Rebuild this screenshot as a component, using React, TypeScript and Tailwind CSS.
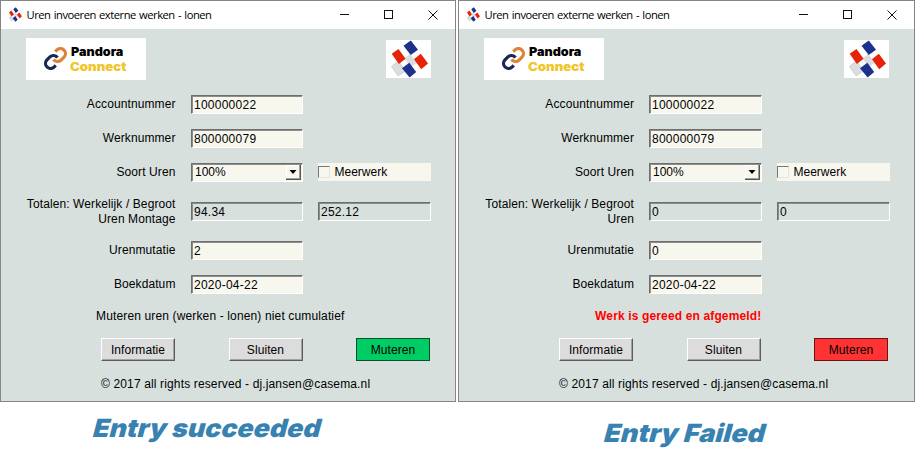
import React from "react";

const SANS = "font-['Liberation_Sans',Arial,sans-serif]";
const HEAVY = "font-['Inter','Arial_Black',sans-serif] font-black";

function Blocks({ className }: { className: string }) {
  return (
    <svg viewBox="0 0 45 38" preserveAspectRatio="none" className={className}>
      <path d="M5.5 26.5L12.5 21L19.5 31L12 35.8Z" fill="#dcdde1" stroke="#c4c5ca" strokeWidth=".8" />
      <path d="M18.5 18.5L24.3 13.8L31 23L24.5 27Z" fill="#dcdde1" />
      <path d="M17.5 5.8L24.8 0.4L32 9.8L24.7 15Z" fill="#1c318b" />
      <path d="M5.7 13.8L12.5 9L19.6 18.8L12.8 24Z" fill="#e62306" />
      <path d="M28 19.2L34.8 13.8L42 23.6L35.2 29.2Z" fill="#e62306" />
      <path d="M16 28.2L23.3 22.8L30.2 32L23.6 37.6Z" fill="#1c318b" />
    </svg>
  );
}

function TitleBar() {
  return (
    <div className="flex h-[27.5px] shrink-0 items-center bg-white">
      <Blocks className="ml-[6px] h-[15px] w-[16px] shrink-0" />
      <span className="ml-[3.5px] mt-[1px] whitespace-nowrap font-['Open_Sans','Noto_Sans',sans-serif] text-[11.2px] tracking-[-0.48px] text-black [word-spacing:0.8px]">
        Uren invoeren externe werken - lonen
      </span>
      <svg className="ml-auto mr-[17px] h-3 w-[98px] shrink-0" viewBox="0 0 98 12" fill="none" stroke="#111">
        <path d="M0 5.5H9" />
        <rect x="44.5" y="1.5" width="8" height="8" />
        <path d="M88.5 1.5L97.5 10.5M97.5 1.5L88.5 10.5" />
      </svg>
    </div>
  );
}

function PandoraLogo() {
  return (
    <div className="flex h-[42px] w-[120px] items-center bg-white">
      <svg viewBox="0.5 0.5 23 23" className="-mt-px ml-[18px] h-[23px] w-[23px] shrink-0" fill="none" strokeWidth="3.2">
        <path d="M10 13a5 5 0 0 0 7.54.54l3-3a5 5 0 0 0-7.07-7.07l-1.72 1.71" stroke="#dc8335" />
        <path d="M14 11a5 5 0 0 0-7.54-.54l-3 3a5 5 0 0 0 7.07 7.07l1.71-1.71" stroke="#172855" />
      </svg>
      <div className={`${HEAVY} ml-[3px] text-[12px] leading-[15px]`}>
        <div className="origin-left scale-x-[1.05] pl-px text-black">Pandora</div>
        <div className="origin-left scale-x-[1.1] text-[#f0c528]">Connect</div>
      </div>
    </div>
  );
}

function Field({ value, readOnly, width = "w-[113px]" }: { value: string; readOnly?: boolean; width?: string }) {
  return (
    <div
      className={`flex h-[19px] shrink-0 items-center border border-b-white border-l-[#6e6e6e] border-r-white border-t-[#6e6e6e] pl-[2px] pt-px tracking-[0.25px] shadow-[inset_1px_1px_0_#8c8c8c] ${width} ${readOnly ? "bg-[#d8e0de]" : "bg-[#f8f7ee]"}`}
    >
      {value}
    </div>
  );
}

function SelectField({ value, width }: { value: string; width: string }) {
  return (
    <div
      className={`flex h-[19px] shrink-0 items-center border border-b-white border-l-[#6e6e6e] border-r-white border-t-[#6e6e6e] bg-[#f8f7ee] pl-[3px] shadow-[inset_1px_1px_0_#8c8c8c] ${width}`}
    >
      {value}
      <div className="ml-auto mr-px flex h-[15px] w-[15px] items-center justify-center border-b border-r border-[#555] bg-[#f8f7ee] shadow-[inset_-1px_-1px_0_#a0a09a,inset_1px_1px_0_#fff]">
        <svg viewBox="0 0 8 4" className="h-1 w-2">
          <path d="M0.5 0H7.5L4 4Z" fill="#000" />
        </svg>
      </div>
    </div>
  );
}

function Row({
  label,
  children,
  className,
  labelWidth,
}: {
  label: React.ReactNode;
  children: React.ReactNode;
  className: string;
  labelWidth: string;
}) {
  return (
    <div className={`flex h-[19px] items-center ${className}`}>
      <div className={`shrink-0 whitespace-nowrap text-right leading-[15px] tracking-[0.1px] ${labelWidth}`}>{label}</div>
      <div className="flex gap-[15px]">{children}</div>
    </div>
  );
}

const GREY = "border-t-white border-l-white border-b-[#5c5c5c] border-r-[#5c5c5c] bg-[#dcdcdc] shadow-[inset_-1px_-1px_0_#a2a2a2]";
const GREEN = "border-[#06502a] bg-[#00cc66]";
const RED = "border-[#6b1414] bg-[#ff3333]";

function Button({ text, tone }: { text: string; tone: string }) {
  return (
    <button className={`flex h-[23px] w-[74px] items-center justify-center border pt-[2px] tracking-[0.08px] ${tone}`}>
      {text}
    </button>
  );
}

type Data = {
  unit: string;
  actual: string;
  budget: string;
  change: string;
  message: string;
  failed?: boolean;
};

function Window({ d }: { d: Data }) {
  const lw = d.failed ? "w-[175px] mr-[15px]" : "w-[174.5px] mr-[15.5px]";
  const fw = d.failed ? "w-[113px]" : "w-[112px]";
  return (
    <div
      className={`flex h-[402px] shrink-0 flex-col border border-[#858585] bg-[#d8e0de] ${d.failed ? "w-[457px]" : "w-[456px]"}`}
    >
      <TitleBar />
      <div className={`${SANS} text-[12px] leading-[15px] text-black`}>
        <div className="ml-[25px] mt-[9.5px] flex w-[405px] items-start justify-between">
          <PandoraLogo />
          <div className="mt-[2px] h-[38px] w-[45px] bg-white">
            <Blocks className="h-[38px] w-[45px]" />
          </div>
        </div>
        <Row label="Accountnummer" labelWidth={lw} className="mt-[15px]">
          <Field value="100000022" width={fw} />
        </Row>
        <Row label="Werknummer" labelWidth={lw} className="mt-[15px]">
          <Field value="800000079" width={fw} />
        </Row>
        <Row label="Soort Uren" labelWidth={lw} className="mt-[15px]">
          <SelectField value="100%" width={fw} />
          <div className="flex h-[18px] w-[113px] items-center bg-[#f8f7ee]">
            <div className="h-[12px] w-[12px] border border-b-[#e4e3dc] border-l-[#777] border-r-[#e4e3dc] border-t-[#777] bg-[#f8f7ee]" />
            <span className="ml-[4.5px]">Meerwerk</span>
          </div>
        </Row>
        <Row label={<>Totalen: Werkelijk / Begroot<br />{d.unit}</>} labelWidth={lw} className="mt-[20px]">
          <Field value={d.actual} readOnly width={fw} />
          <Field value={d.budget} readOnly />
        </Row>
        <Row label="Urenmutatie" labelWidth={lw} className="mt-[20px]">
          <Field value={d.change} width={fw} />
        </Row>
        <Row label="Boekdatum" labelWidth={lw} className="mt-[15px]">
          <Field value="2020-04-22" width={fw} />
        </Row>
        <div
          className={`mt-[15px] w-[438.5px] text-center tracking-[0.14px] ${d.failed ? "font-bold text-[#ff0000]" : ""}`}
        >
          {d.message}
        </div>
        <div className="ml-[100px] mt-[14px] flex w-[329px] justify-between">
          <Button text="Informatie" tone={GREY} />
          <Button text="Sluiten" tone={GREY} />
          <Button text="Muteren" tone={d.failed ? RED : GREEN} />
        </div>
        <div className="ml-[100px] mt-[16px] whitespace-nowrap tracking-[0.14px]">
          © 2017 all rights reserved - dj.jansen@casema.nl
        </div>
      </div>
    </div>
  );
}

export default function App() {
  return (
    <div className="h-[461px] w-[917px] overflow-hidden bg-white">
      <div className="flex gap-[2px] bg-white">
        <Window d={{ unit: "Uren Montage", actual: "94.34", budget: "252.12", change: "2", message: "Muteren uren (werken - lonen) niet cumulatief" }} />
        <Window d={{ unit: "Uren", actual: "0", budget: "0", change: "0", message: "Werk is gereed en afgemeld!", failed: true }} />
      </div>
      <div className={`${HEAVY} flex whitespace-nowrap text-[25px] leading-[30px] text-[#3782b0]`}>
        <div className="ml-[90px] mt-[11px] w-[511px]">
          <span className="inline-block origin-bottom-left scale-x-[1.07] skew-x-[-14deg]">Entry succeeded</span>
        </div>
        <div className="mt-[16px]">
          <span className="inline-block origin-bottom-left scale-x-[1.08] skew-x-[-14deg]">Entry Failed</span>
        </div>
      </div>
    </div>
  );
}
